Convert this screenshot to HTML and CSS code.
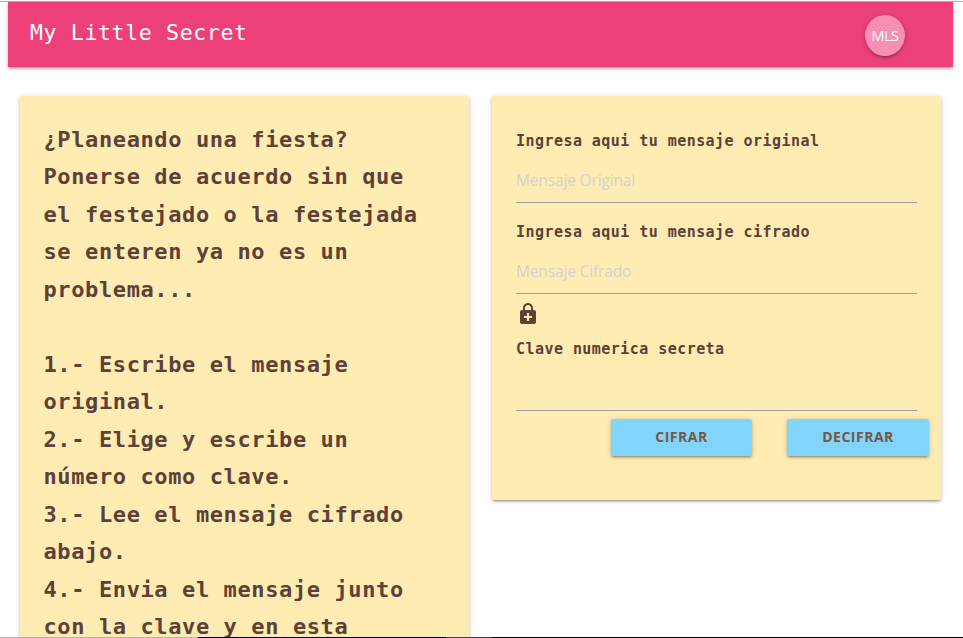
FILE: index.html
```html
<!DOCTYPE html>
<html lang="es">
<head>
<meta charset="utf-8">
<title>My Little Secret</title>
<link rel="stylesheet" href="styles.css">
</head>
<body>
<header class="navbar">
  <h1 class="brand">My Little Secret</h1>
  <div class="badge">MLS</div>
</header>
<main class="columns">
  <section class="card intro">
    <p>¿Planeando una fiesta?<br>Ponerse de acuerdo sin que<br>el festejado o la festejada<br>se enteren ya no es un<br>problema...</p>
    <p>1.- Escribe el mensaje<br>original.<br>2.- Elige y escribe un<br>número como clave.<br>3.- Lee el mensaje cifrado<br>abajo.<br>4.- Envia el mensaje junto<br>con la clave y en esta</p>
  </section>
  <form class="card cipher">
    <label class="label" for="original">Ingresa aqui tu mensaje original</label>
    <input class="field" id="original" type="text" placeholder="Mensaje Original">
    <label class="label second" for="cifrado">Ingresa aqui tu mensaje cifrado</label>
    <input class="field" id="cifrado" type="text" placeholder="Mensaje Cifrado">
    <svg class="lock" viewBox="0 0 24 24" aria-hidden="true"><path d="M18 8h-1V6c0-2.760-2.240-5-5-5S7 3.240 7 6v2H6c-1.100 0-2 .9-2 2v10c0 1.100.9 2 2 2h12c1.100 0 2-.9 2-2V10c0-1.100-.9-2-2-2zM8.900 6c0-1.710 1.390-3.100 3.100-3.100s3.100 1.390 3.100 3.100v2H8.900V6zM16 16h-3v3h-2v-3H8v-2h3v-3h2v3h3v2z"/></svg>
    <label class="label" for="clave">Clave numerica secreta</label>
    <input class="field key" id="clave" type="text">
    <div class="actions">
      <button class="btn" type="button">CIFRAR</button>
      <button class="btn wide" type="button">DECIFRAR</button>
    </div>
  </form>
</main>
<div class="frame-edge"></div>
</body>
</html>
```
FILE: styles.css
```css
* { box-sizing: border-box; }
html { height: 100%; overflow: hidden; }
body {
  height: 638px;
  margin: 0;
  padding-top: 1px;
  overflow: hidden;
  background: #fff;
  color: #5d4037;
  font-family: "Open Sans", "Noto Sans", sans-serif;
}
body::before { content: ""; display: block; height: 1px; background: #b5b2b4; }
.navbar {
  display: flex;
  justify-content: space-between;
  height: 65px;
  margin: 0 10px 0 8px;
  padding: 13px 48px 0 22px;
  background: #ec4079;
  box-shadow: 0 2px 2px rgba(0,0,0,.14), 0 3px 1px -2px rgba(0,0,0,.12), 0 1px 5px rgba(0,0,0,.2);
}
.brand {
  margin: 0;
  color: #fff;
  font: 400 21.500px/36px "DejaVu Sans Mono", monospace;
  letter-spacing: .66px;
}
.badge {
  width: 40px;
  height: 41px;
  border-radius: 50%;
  background: #f78fb3;
  color: #fff;
  font-size: 14.500px;
  line-height: 41px;
  letter-spacing: -.5px;
  text-align: center;
  box-shadow: 0 2px 2px rgba(0,0,0,.14), 0 3px 1px -2px rgba(0,0,0,.12), 0 1px 5px rgba(0,0,0,.2);
}
.columns {
  display: grid;
  grid-template-columns: 449px 449px;
  gap: 23px;
  align-items: start;
  padding: 29px 0 0 20px;
}
.card {
  background: #ffecb3;
  border-radius: 2px;
  box-shadow: 0 2px 2px rgba(0,0,0,.14), 0 3px 1px -2px rgba(0,0,0,.12), 0 1px 5px rgba(0,0,0,.2);
}
.intro {
  height: 542px;
  padding: 24.500px 0 0 23.500px;
  overflow: hidden;
  border-radius: 2px 2px 0 0;
  font: 700 22px/37.500px "DejaVu Sans Mono", monospace;
  letter-spacing: .61px;
  white-space: nowrap;
}
.intro p { margin: 0 0 37.500px; }
.cipher {
  display: flex;
  flex-direction: column;
  height: 404px;
  padding: 33px 24px 0;
}
.label {
  height: 24px;
  font: 700 15px/24px "DejaVu Sans Mono", monospace;
  letter-spacing: .45px;
}
.label.second { margin-top: 17px; }
.field {
  width: 100%;
  height: 44px;
  margin: 6px 0 0;
  padding: 0 0 1px;
  border: 0;
  border-bottom: 1px solid #9e9e9e;
  border-radius: 0;
  outline: 0;
  background: transparent;
  color: #5d4037;
  font: 400 15.500px "Open Sans", sans-serif;
  letter-spacing: -.15px;
}
.field::placeholder { color: #d1d1d1; opacity: 1; }
.lock {
  width: 24px;
  height: 24px;
  margin: 8px 0 11px;
  fill: #5d4037;
}
.actions {
  display: flex;
  justify-content: flex-end;
  gap: 35px;
  margin: 8px -12px 0 0;
}
.btn {
  width: 141px;
  height: 37px;
  padding: 0 0 2px;
  border: 0;
  border-radius: 2px;
  background: #81d4fa;
  color: #795548;
  font: 700 14px/35px "Open Sans", sans-serif;
  letter-spacing: .5px;
  box-shadow: 0 2px 2px rgba(0,0,0,.14), 0 3px 1px -2px rgba(0,0,0,.12), 0 1px 5px rgba(0,0,0,.2);
}
.btn.wide { width: 142px; }
.frame-edge {
  position: absolute;
  left: 0;
  right: 0;
  bottom: 0;
  height: 1px;
  background: linear-gradient(to right, #b5b2b4 198px, #000 198px, #000 446px, #443b3d 446px, #443b3d 492px, #000 492px);
}
```
